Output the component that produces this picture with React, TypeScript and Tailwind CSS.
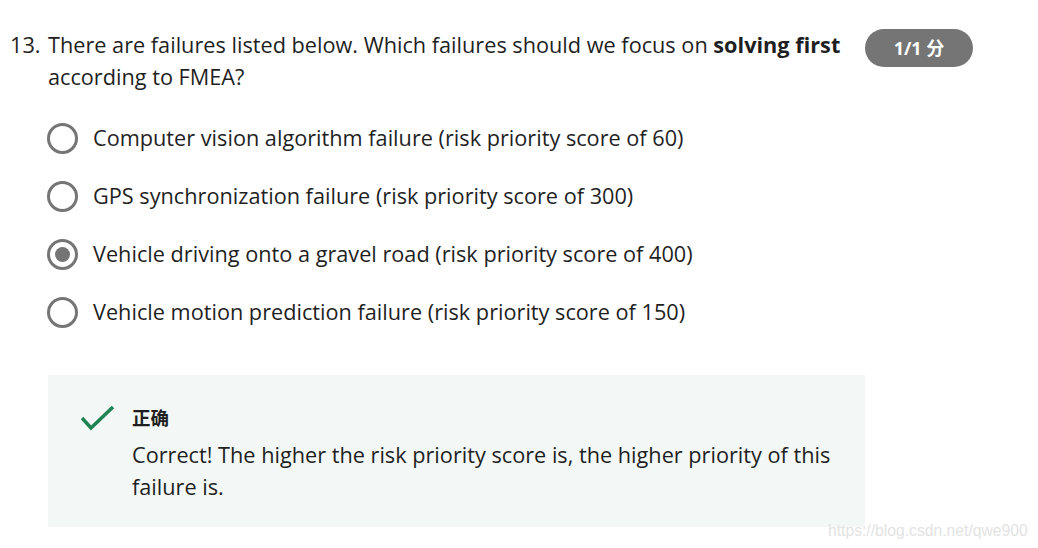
import React from "react";

const options = [
  "Computer vision algorithm failure (risk priority score of 60)",
  "GPS synchronization failure (risk priority score of 300)",
  "Vehicle driving onto a gravel road (risk priority score of 400)",
  "Vehicle motion prediction failure (risk priority score of 150)",
];
const selected = 2;

function Radio({ checked }: { checked: boolean }) {
  return (
    <span className="flex h-[31px] w-[31px] shrink-0 items-center justify-center rounded-full border-[3px] border-[#757575] bg-white">
      {checked && <span className="h-[15px] w-[15px] rounded-full bg-[#757575]" />}
    </span>
  );
}

export default function App() {
  return (
    <div
      className="relative h-[548px] w-[1038px] overflow-hidden bg-white text-[#1f1f1f]"
      style={{ fontFamily: '"Open Sans", "Noto Sans CJK SC", sans-serif' }}
    >
      <div className="flex items-start pl-[10px] pt-[29px]">
        <span className="w-[38px] shrink-0 text-[21.7px] leading-[32px]">13.</span>
        <p className="w-[805px] shrink-0 text-[21.7px] leading-[32px]">
          There are failures listed below. Which failures should we focus on <b className="font-bold">solving first</b> according to FMEA?
        </p>
        <span className="ml-[12px] flex h-[38px] w-[108px] items-center justify-center rounded-full bg-[#757575] text-[18px] font-bold text-white">
          1/1 分
        </span>
      </div>

      <div className="ml-[47px] mt-[16px] flex flex-col">
        {options.map((o, i) => (
          <label key={i} className="flex h-[58px] items-center gap-[15px]">
            <Radio checked={i === selected} />
            <span className="text-[21.7px] leading-[32px]">{o}</span>
          </label>
        ))}
      </div>

      <div className="ml-[48px] mt-[34px] flex w-[817px] gap-[17px] bg-[#f3f8f6] pb-[24px] pl-[33px] pr-[30px] pt-[30px]">
        <svg width="34" height="28" viewBox="0 0 34 28" className="mt-[-1px] shrink-0">
          <polyline points="1,14 10,24 32,3" fill="none" stroke="#1f8354" strokeWidth="3.5" />
        </svg>
        <div className="flex flex-col">
          <span className="text-[18.5px] font-bold leading-[26px]">正确</span>
          <p className="mt-[8px] text-[21.7px] leading-[32px]">
            Correct! The higher the risk priority score is, the higher priority of this failure is.
          </p>
        </div>
      </div>

      <span
        className="absolute left-[828px] top-[519px] text-[15.7px] text-[#e3e3e3]"
        style={{ fontFamily: '"Liberation Sans", Arial, sans-serif' }}
      >
        https://blog.csdn.net/qwe900
      </span>
    </div>
  );
}
